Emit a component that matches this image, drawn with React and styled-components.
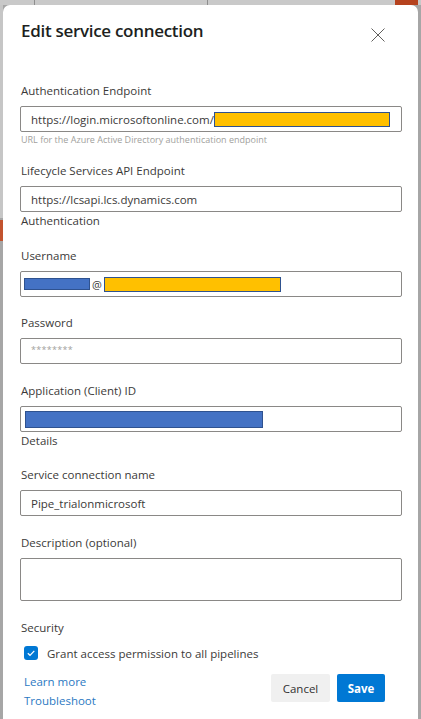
import React from "react";
import styled, { createGlobalStyle } from "styled-components";

const FONT = `"Open Sans", "Noto Sans", "Liberation Sans", sans-serif`;

const Global = createGlobalStyle`
  html, body { margin: 0; padding: 0; }
  body {
    font-family: ${FONT};
    background:
      linear-gradient(#b5421e, #b5421e) 395px 0 / 23px 5px no-repeat,
      linear-gradient(#c2532e, #c2532e) 0 220px / 3px 21px no-repeat,
      linear-gradient(#8e8e8e, #8e8e8e) 34px 0 / 1px 5px no-repeat,
      linear-gradient(#8e8e8e, #8e8e8e) 207px 0 / 1px 5px no-repeat,
      linear-gradient(#c9c9c9, #c9c9c9) 0 0 / 100% 5px no-repeat,
      linear-gradient(#c6c6c6, #c6c6c6) 0 0 / 3px 218px no-repeat,
      #a6a6a6;
    min-height: 719px;
    overflow: hidden;
  }
`;

const Dialog = styled.div`
  margin: 5px 3px 0;
  min-height: 714px;
  background: #ffffff;
  border-radius: 7px 7px 0 0;
  box-sizing: border-box;
  padding: 14px 16px 0 17px;
  display: flex;
  flex-direction: column;
`;

const Header = styled.div`
  display: flex;
  align-items: center;
  justify-content: space-between;
  height: 24px;
  padding-right: 16px;
`;

const Title = styled.h1`
  margin: 0;
  font-size: 17px;
  letter-spacing: -0.3px;
  line-height: 24px;
  font-weight: 600;
  color: #201f1e;
  padding-left: 1px;
`;

const CloseButton = styled.button`
  border: 0;
  background: transparent;
  padding: 0;
  width: 16px;
  height: 16px;
  margin-top: 8px;
  display: flex;
  align-items: center;
  justify-content: center;
  cursor: pointer;
`;

const Form = styled.div`
  display: flex;
  flex-direction: column;
  margin-top: 40px;
`;

const Label = styled.div`
  font-size: 11.5px;
  line-height: 16px;
  color: #3b3a39;
  margin-top: ${(p) => p.$mt ?? 0}px;
  padding-left: 1px;
`;

const Input = styled.div`
  box-sizing: border-box;
  height: ${(p) => p.$h ?? 26}px;
  margin-top: 7px;
  border: 1px solid #8a8886;
  border-radius: 2px;
  display: flex;
  align-items: center;
  padding-left: ${(p) => p.$pl ?? 10}px;
  font-size: 11.5px;
  color: #3b3a39;
  white-space: nowrap;
  overflow: hidden;
`;

const Placeholder = styled.span`
  font-size: 9px;
  color: #a19f9d;
  letter-spacing: 0.3px;
  margin-top: -3px;
`;

const Redact = styled.span`
  display: inline-block;
  box-sizing: border-box;
  width: ${(p) => p.$w}px;
  height: ${(p) => p.$h}px;
  background: ${(p) => (p.$c === "blue" ? "#4472c4" : "#ffc000")};
  border: 1px solid #2f528f;
  flex: none;
`;

const At = styled.span`
  margin: 1px 2px 0;
  font-size: 11px;
  color: #3b3a39;
`;

const Helper = styled.div`
  font-size: 9px;
  line-height: 14px;
  color: #a19f9d;
  margin-top: 1px;
  padding-left: 1px;
`;

const Section = styled.div`
  font-size: 11.5px;
  line-height: 16px;
  color: #3b3a39;
  margin-top: 1px;
  padding-left: 1px;
`;

const CheckRow = styled.label`
  display: flex;
  align-items: center;
  gap: 9px;
  margin-top: 9px;
  padding-left: 4px;
  height: 16px;
  font-size: 11.5px;
  color: #3b3a39;
`;

const Box = styled.span`
  width: 14px;
  height: 14px;
  border-radius: 3px;
  background: #0078d4;
  display: flex;
  align-items: center;
  justify-content: center;
  flex: none;
`;

const Footer = styled.div`
  display: flex;
  justify-content: space-between;
  align-items: flex-start;
  margin-top: 11px;
  padding-right: 17px;
`;

const Links = styled.div`
  display: flex;
  flex-direction: column;
  padding-left: 4px;
`;

const Link = styled.a`
  font-size: 11.5px;
  line-height: 19px;
  color: #2b79c2;
  text-decoration: none;
`;

const Buttons = styled.div`
  display: flex;
  gap: 7px;
  margin-top: 2px;
`;

const Button = styled.button`
  box-sizing: border-box;
  height: 28px;
  width: ${(p) => p.$w}px;
  border: 0;
  border-radius: 2px;
  font-family: ${FONT};
  font-size: 11.5px;
  font-weight: ${(p) => (p.$primary ? 700 : 400)};
  background: ${(p) => (p.$primary ? "#0078d4" : "#f0f0f0")};
  color: ${(p) => (p.$primary ? "#ffffff" : "#323130")};
  padding: 0;
  cursor: pointer;
`;

export default function App() {
  return (
    <>
      <Global />
      <Dialog>
        <Header>
          <Title>Edit service connection</Title>
          <CloseButton aria-label="Close">
            <svg width="14" height="14" viewBox="0 0 14 14">
              <path d="M0.5 0.5 L13.5 13.5 M13.5 0.5 L0.5 13.5" stroke="#605e5c" strokeWidth="1" fill="none" />
            </svg>
          </CloseButton>
        </Header>
        <Form>
          <Label>Authentication Endpoint</Label>
          <Input>
            https://login.microsoftonline.com/
            <Redact $w={176} $h={15} />
          </Input>
          <Helper>URL for the Azure Active Directory authentication endpoint</Helper>

          <Label $mt={16}>Lifecycle Services API Endpoint</Label>
          <Input>https://lcsapi.lcs.dynamics.com</Input>
          <Section>Authentication</Section>

          <Label $mt={19}>Username</Label>
          <Input $pl={3}>
            <Redact $c="blue" $w={66} $h={12} />
            <At>@</At>
            <Redact $w={177} $h={15} />
          </Input>

          <Label $mt={18}>Password</Label>
          <Input>
            <Placeholder>********</Placeholder>
          </Input>

          <Label $mt={19}>Application (Client) ID</Label>
          <Input $pl={4}>
            <Redact $c="blue" $w={238} $h={17} />
          </Input>
          <Section>Details</Section>

          <Label $mt={18}>Service connection name</Label>
          <Input>Pipe_trialonmicrosoft</Input>

          <Label $mt={19}>Description (optional)</Label>
          <Input $h={43} />

          <Label $mt={19}>Security</Label>
          <CheckRow>
            <Box>
              <svg width="10" height="10" viewBox="0 0 10 10">
                <path d="M1.8 5.2 L4 7.3 L8.3 2.8" stroke="#fff" strokeWidth="1.2" fill="none" />
              </svg>
            </Box>
            Grant access permission to all pipelines
          </CheckRow>
        </Form>
        <Footer>
          <Links>
            <Link href="#">Learn more</Link>
            <Link href="#">Troubleshoot</Link>
          </Links>
          <Buttons>
            <Button $w={59}>Cancel</Button>
            <Button $primary $w={48}>Save</Button>
          </Buttons>
        </Footer>
      </Dialog>
    </>
  );
}
